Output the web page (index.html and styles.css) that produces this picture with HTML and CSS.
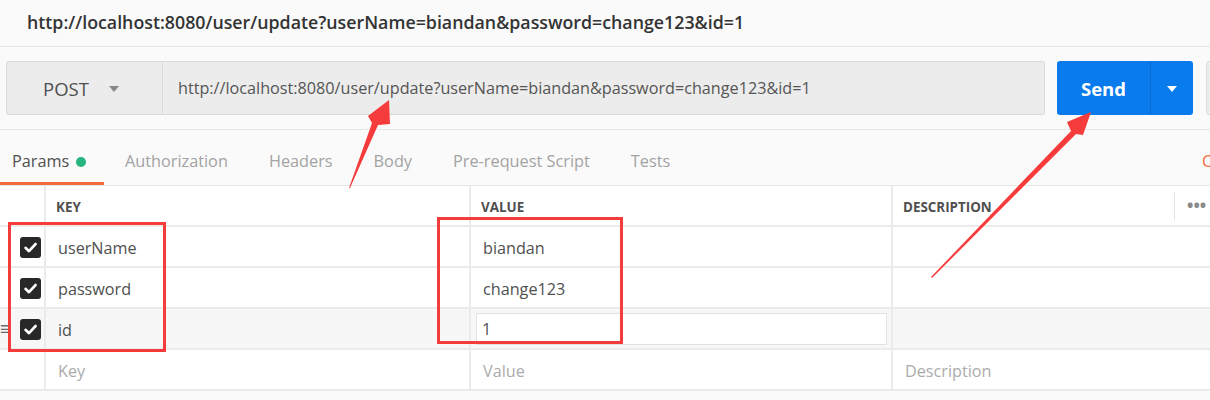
FILE: index.html
```html
<!DOCTYPE html>
<html>
<head>
<meta charset="utf-8">
<link rel="stylesheet" href="styles.css">
</head>
<body>
<div class="page">
  <div class="title-bar">http://localhost:8080/user/update?userName=biandan&amp;password=change123&amp;id=1</div>

  <div class="request">
    <div class="method">
      <span>POST</span>
      <span class="caret"></span>
    </div>
    <div class="url">http://localhost:8080/user/update?userName=biandan&amp;password=change123&amp;id=1</div>
    <div class="send">
      <span class="send-main">Send</span>
      <span class="send-drop"><span class="caret white"></span></span>
    </div>
    <div class="save"></div>
  </div>

  <div class="tabs">
    <div class="tab active">Params <span class="dot"></span></div>
    <div class="tab">Authorization</div>
    <div class="tab">Headers</div>
    <div class="tab">Body</div>
    <div class="tab">Pre-request Script</div>
    <div class="tab">Tests</div>
    <div class="tab-spacer"></div>
    <div class="cookies">Cookies</div>
  </div>

  <div class="table">
    <div class="row head">
      <div class="cell c0"></div>
      <div class="cell">KEY</div>
      <div class="cell">VALUE</div>
      <div class="cell last">DESCRIPTION<span class="hdiv"></span><span class="more">•••</span></div>
    </div>
    <div class="row">
      <div class="cell c0"><span class="check"><svg viewBox="0 0 21 21" width="21" height="21"><path d="M5.5 10.8 L9 14.2 L15.6 7" fill="none" stroke="#fff" stroke-width="2.6" stroke-linecap="round" stroke-linejoin="round"/></svg></span></div>
      <div class="cell">userName</div>
      <div class="cell">biandan</div>
      <div class="cell last"></div>
    </div>
    <div class="row">
      <div class="cell c0"><span class="check"><svg viewBox="0 0 21 21" width="21" height="21"><path d="M5.5 10.8 L9 14.2 L15.6 7" fill="none" stroke="#fff" stroke-width="2.6" stroke-linecap="round" stroke-linejoin="round"/></svg></span></div>
      <div class="cell">password</div>
      <div class="cell">change123</div>
      <div class="cell last"></div>
    </div>
    <div class="row hover">
      <div class="cell c0"><span class="handle">≡</span><span class="check"><svg viewBox="0 0 21 21" width="21" height="21"><path d="M5.5 10.8 L9 14.2 L15.6 7" fill="none" stroke="#fff" stroke-width="2.6" stroke-linecap="round" stroke-linejoin="round"/></svg></span></div>
      <div class="cell">id</div>
      <div class="cell edit"><div class="input">1</div></div>
      <div class="cell last"></div>
    </div>
    <div class="row">
      <div class="cell c0"></div>
      <div class="cell ph">Key</div>
      <div class="cell ph">Value</div>
      <div class="cell last ph">Description</div>
    </div>
  </div>

  <svg class="annot" width="1210" height="400" viewBox="0 0 1210 400">
    <rect x="9.5" y="223.5" width="155" height="127" fill="none" stroke="#f53b3b" stroke-width="3"/>
    <rect x="438.5" y="218.5" width="183" height="124" fill="none" stroke="#f53b3b" stroke-width="3"/>
    <polygon points="349,188 372,123 368,116 389,100 390,124 378,125 350,188" fill="#f53b3b"/>
    <polygon points="931,277 1071,131 1067,122 1091,112 1083,135 1076,134 932,278" fill="#f53b3b"/>
  </svg>
</div>
</body>
</html>
```
FILE: styles.css
```css
* { box-sizing: border-box; }
html, body { margin: 0; padding: 0; }
body {
  background: #fafafa;
  font-family: "Open Sans", "Liberation Sans", sans-serif;
  color: #505050;
  width: 1210px;
  height: 400px;
  overflow: hidden;
}
.page { position: relative; width: 1210px; height: 400px; overflow: hidden; }

.title-bar {
  height: 47px;
  padding-left: 27px;
  display: flex;
  align-items: center;
  font-size: 17.8px;
  font-weight: 600;
  color: #333;
  border-bottom: 1px solid #e6e6e6;
  white-space: nowrap;
  padding-bottom: 3px;
}

.request {
  display: flex;
  align-items: stretch;
  padding: 14px 0 14px 6px;
  height: 83px;
  border-bottom: 1px solid #e6e6e6;
}
.method {
  width: 157px;
  height: 54px;
  background: #ececec;
  border: 1px solid #d9d9d9;
  border-radius: 3px 0 0 3px;
  display: flex;
  align-items: center;
  padding-left: 36px;
  font-size: 18.5px;
  color: #505050;
  flex: none;
}
.caret {
  display: inline-block;
  margin-left: 20px;
  width: 0; height: 0;
  border-left: 5px solid transparent;
  border-right: 5px solid transparent;
  border-top: 6px solid #888;
  margin-top: 1px;
}
.caret.white { border-top-color: #fff; margin-left: 0; }
.url {
  width: 882px;
  height: 54px;
  background: #ececec;
  border: 1px solid #d9d9d9;
  border-left: none;
  border-radius: 0 3px 3px 0;
  display: flex;
  align-items: center;
  padding-left: 15px;
  font-size: 16.2px;
  color: #555;
  white-space: nowrap;
  flex: none;
}
.send {
  margin-left: 12px;
  width: 136px;
  height: 54px;
  background: #097bed;
  border-radius: 3px;
  display: flex;
  flex: none;
  color: #fff;
}
.send-main {
  width: 94px;
  display: flex;
  align-items: center;
  justify-content: center;
  font-size: 18.5px;
  font-weight: 700;
  border-right: 1px solid #0a6ad0;
}
.send-drop {
  flex: 1;
  display: flex;
  align-items: center;
  justify-content: center;
}
.save {
  margin-left: 13px;
  width: 60px;
  height: 54px;
  background: #ececec;
  border: 1px solid #ddd;
  border-radius: 3px;
  flex: none;
}

.tabs {
  display: flex;
  height: 56px;
  border-bottom: 1px solid #e6e6e6;
  align-items: stretch;
  white-space: nowrap;
}
.tab {
  padding: 9px 20.5px 0;
  display: flex;
  align-items: center;
  font-size: 16.3px;
  color: #a3a3a3;
  border-bottom: 3px solid transparent;
  flex: none;
}
.tab.active {
  padding: 9px 18px 0 12px;
  color: #505050;
  border-bottom-color: #f26b3a;
}
.dot {
  display: inline-block;
  width: 10px; height: 10px;
  border-radius: 50%;
  background: #26b47f;
  margin-left: 7px;
  margin-top: 2px;
}
.tab-spacer { flex: 1; }
.cookies {
  display: flex;
  align-items: center;
  padding-top: 9px;
  padding-bottom: 3px;
  font-size: 16.3px;
  color: #f26b3a;
  width: 8px;
  overflow: hidden;
  flex: none;
}

.table { background: #fff; }
.row {
  display: grid;
  grid-template-columns: 46px 425px 422px 1fr;
  height: 41px;
  border-bottom: 2px solid #ebebeb;
  background: #fff;
}
.row.hover { background: #f7f7f7; }
.cell {
  border-right: 2px solid #ebebeb;
  display: flex;
  align-items: center;
  padding-left: 12px;
  font-size: 16.2px;
  color: #505050;
  white-space: nowrap;
  position: relative;
  padding-top: 2px;
}
.cell.last { border-right: none; }
.cell.c0 { padding-left: 20px; }
.head .cell {
  font-size: 13.4px;
  font-weight: 700;
  color: #505050;
  padding-left: 10px;
}
.hdiv {
  position: absolute;
  left: 281px;
  top: 6px;
  width: 1px;
  height: 28px;
  background: #e3e3e3;
}
.more {
  position: absolute;
  left: 294px;
  top: 8px;
  font-size: 17px;
  letter-spacing: 0px;
  color: #8a8a8a;
}
.ph { color: #ababab; }
.check {
  width: 21px;
  height: 21px;
  background: #282828;
  border-radius: 3px;
  display: block;
}
.check svg { display: block; }
.handle {
  position: absolute;
  left: 0;
  top: 10px;
  font-size: 18px;
  color: #6a6a6a;
  line-height: 1;
}
.cell.edit { padding-left: 5px; padding-top: 0; }
.input {
  width: 411px;
  height: 32px;
  background: #fff;
  border: 1px solid #e2e2e2;
  display: flex;
  align-items: center;
  padding-left: 5px;
  margin-top: 1px;
}

.annot {
  position: absolute;
  left: 0;
  top: 0;
  pointer-events: none;
}
```
